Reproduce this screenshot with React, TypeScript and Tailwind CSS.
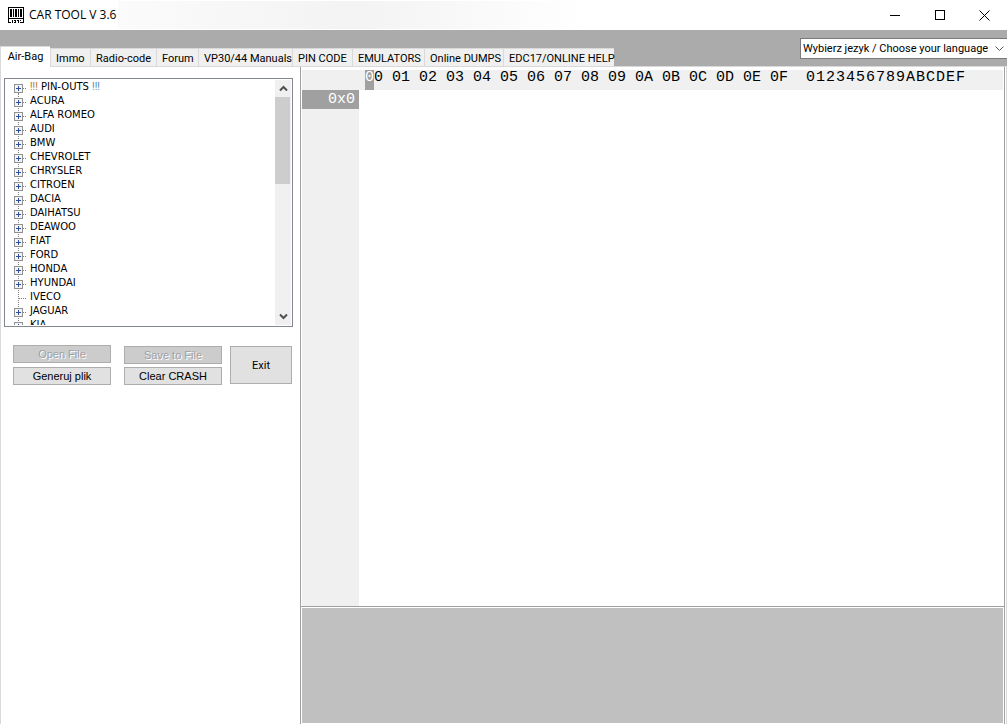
import { useState } from 'react';

const tabs = [
  { label: 'Immo', width: 'w-10' },
  { label: 'Radio-code', width: 'w-[66px]' },
  { label: 'Forum', width: 'w-[42px]' },
  { label: 'VP30/44 Manuals', width: 'w-[94px]' },
  { label: 'PIN CODE', width: 'w-[60px]' },
  { label: 'EMULATORS', width: 'w-[72px]' },
  { label: 'Online DUMPS', width: 'w-[79px]' },
  { label: 'EDC17/ONLINE HELP', width: 'w-[111px]' },
];

const makes = [
  '!!! PIN-OUTS !!!', 'ACURA', 'ALFA ROMEO', 'AUDI', 'BMW', 'CHEVROLET', 'CHRYSLER', 'CITROEN', 'DACIA',
  'DAIHATSU', 'DEAWOO', 'FIAT', 'FORD', 'HONDA', 'HYUNDAI', 'IVECO', 'JAGUAR', 'KIA',
];

const digits = '0123456789ABCDEF'.split('');

function AppIcon() {
  return (
    <svg width="16" height="16" viewBox="0 0 16 16" shapeRendering="crispEdges" aria-hidden="true">
      <path d="M0 0h16v16h-4v-1h3V1H1v14h2v1H0z" fill="#000" />
      <path d="M2 2h2v8H2zM5 2h1v8H5zM7 2h2v8H7zM10 2h1v8h-1zM12 2h2v8h-2zM1 11h14v1H1zM4 13h1v3H4zM6 13h2v1H6zM7 14h1v1H7zM6 15h2v1H6zM9 13h2v1H9zM10 14h1v2h-1zM12 13h1v1h-1z" fill="#000" />
    </svg>
  );
}

function Expander({ leaf, first }: { leaf: boolean; first: boolean }) {
  return (
    <svg className="shrink-0" width="16" height="14" viewBox="0 0 16 14" shapeRendering="crispEdges" aria-hidden="true">
      <path d={first ? 'M5.5 7v7' : 'M5.5 0v14'} stroke="#808080" strokeDasharray="1 1" />
      <path d="M6 8.5h7" stroke="#808080" strokeDasharray="1 1" />
      {!leaf && (
        <>
          <rect x="1.500" y="4.500" width="8" height="8" fill="#f4f4f4" stroke="#919191" />
          <path d="M3 8.500h5M5.500 6v5" stroke="#2f4f9f" />
        </>
      )}
    </svg>
  );
}

function Chevron({ up = false }: { up?: boolean }) {
  return (
    <svg width="9" height="7" viewBox="0 0 9 7" fill="none" stroke="#505050" strokeWidth="2" aria-hidden="true">
      <path d={up ? 'M1 5.500 4.500 2 8 5.500' : 'M1 1.500 4.500 5 8 1.500'} />
    </svg>
  );
}

function MakeLabel({ text }: { text: string }) {
  if (!text.startsWith('!!!')) return <>{text}</>;
  return (
    <>
      <span className="font-['Roboto',sans-serif] text-[#b87020]">!!!</span>
      {` ${text.slice(4, -4)} `}
      <span className="font-['Roboto',sans-serif] text-[#4a86b8]">!!!</span>
    </>
  );
}

const caption = 'flex h-7 w-[45px] items-center justify-center';
const button = 'flex h-[18px] w-[98px] items-center justify-center border border-[#adadad] font-["Liberation_Sans",sans-serif] text-[11px] leading-4';

export default function App() {
  const [active, setActive] = useState('Air-Bag');
  return (
    <div className="flex min-h-screen flex-col bg-white font-['Roboto',sans-serif] text-[11px] text-black">
      <header className="flex h-[30px] items-center bg-white pl-2">
        <AppIcon />
        <h1 className="w-[94px] whitespace-nowrap pl-[5px] font-['Open_Sans',sans-serif] text-xs leading-4">CAR TOOL V 3.6</h1>
        <div className="h-7 w-[470px] bg-linear-to-r from-[#fbfbfb] via-[#f3f3f3] to-white" />
        <div className="ml-auto flex">
          <button className={caption} aria-label="Minimize">
            <svg width="10" height="10" stroke="#000" shapeRendering="crispEdges"><path d="M0 5.500h10" /></svg>
          </button>
          <button className={caption} aria-label="Maximize">
            <svg width="10" height="10" fill="none" stroke="#000" shapeRendering="crispEdges"><path d="M.5.5h9v9h-9z" /></svg>
          </button>
          <button className={caption} aria-label="Close">
            <svg width="11" height="11" stroke="#000"><path d="m.5.5 10 10m0-10-10 10" /></svg>
          </button>
        </div>
      </header>

      <nav className="flex h-9 items-end justify-between bg-[#ababab]">
        <div role="tablist" className="flex items-end whitespace-nowrap">
          <button
            role="tab"
            aria-selected={active === 'Air-Bag'}
            onClick={() => setActive('Air-Bag')}
            className="relative z-10 -mb-px flex h-[21px] w-[50px] items-center justify-center border-t border-l border-[#d9d9d9] bg-white leading-4"
          >
            Air-Bag
          </button>
          {tabs.map(({ label, width }) => (
            <button
              key={label}
              role="tab"
              aria-selected={active === label}
              onClick={() => setActive(label)}
              className={`${width} flex h-[18px] items-center justify-start border-t border-l border-[#d9d9d9] bg-[#f0f0f0] pt-0.5 pl-[5px] leading-4`}
            >
              {label}
            </button>
          ))}
        </div>
        <div className="flex h-full pt-2">
          <label htmlFor="language" className="sr-only">Language</label>
          <div className="grid h-[21px] w-[207px]">
            <select
              id="language"
              className="col-start-1 row-start-1 h-[21px] appearance-none border border-r-0 border-[#7a7a7a] bg-white pl-0.5 text-[11px] leading-4"
            >
              <option>Wybierz jezyk / Choose your language</option>
            </select>
            <svg className="pointer-events-none col-start-1 row-start-1 mr-[3px] self-center justify-self-end" width="9" height="6" fill="none" stroke="#555" aria-hidden="true">
              <path d="m.5.5 4 4 4-4" />
            </svg>
          </div>
        </div>
      </nav>

      <main className="flex flex-1 border-t border-l border-[#d9d9d9]">
        <aside className="flex w-[299px] shrink-0 flex-col">
          <section className="mt-[11px] ml-[3px] flex h-[249px] w-[289px] border border-[#828790] p-px">
            <ul className="flex-1 overflow-hidden pl-[7px] text-[10px]">
              {makes.map((make, i) => (
                <li key={make} className="flex h-3.5 items-center whitespace-nowrap leading-3.5">
                  <Expander leaf={make === 'IVECO'} first={i === 0} />
                  <span className="whitespace-pre pl-px font-['DejaVu_Sans',sans-serif]"><MakeLabel text={make} /></span>
                </li>
              ))}
            </ul>
            <div className="flex w-4 flex-col items-center bg-[#f0f0f0]">
              <button className="flex h-[17px] w-full items-center justify-center" aria-label="Scroll up"><Chevron up /></button>
              <div className="h-[87px] w-[15px] self-start bg-[#cdcdcd]" />
              <button className="mt-auto flex h-[17px] w-full items-center justify-center" aria-label="Scroll down"><Chevron /></button>
            </div>
          </section>
          <section className="mt-[18px] flex items-start pl-3 whitespace-nowrap">
            <div className="flex flex-col gap-1">
              <button disabled className={`${button} bg-[#cccccc] text-[#a0a0a0] text-shadow-[1px_1px_0_white]`}>Open File</button>
              <button className={`${button} bg-[#e1e1e1]`}>Generuj plik</button>
            </div>
            <div className="mt-px ml-[13px] flex flex-col gap-[3px]">
              <button disabled className={`${button} bg-[#cccccc] text-[#a0a0a0] text-shadow-[1px_1px_0_white]`}>Save to File</button>
              <button className={`${button} bg-[#e1e1e1]`}>Clear CRASH</button>
            </div>
            <button className="mt-px ml-2 h-[38px] w-[62px] border border-[#adadad] bg-[#e1e1e1] pt-0.5 text-[11px]">Exit</button>
          </section>
        </aside>

        <section className="mr-px flex min-w-0 flex-1 flex-col border-x border-[#a0a0a0] pt-[3px]">
          <div className="flex flex-1 flex-col border-l border-white font-['Liberation_Mono',monospace] text-[15px] leading-4">
            <div className="mr-px flex h-5 bg-[#f0f0f0] pl-[63px]">
              {digits.map((d, i) => (
                <span key={d} className="w-[27px] shrink-0">
                  {i === 0 ? <><span className="inline-block h-5 w-[9px] bg-[#a0a0a0] text-white">0</span>0</> : `0${d}`}
                </span>
              ))}
              <span className="flex pl-[9px]">
                {digits.map((d) => <span key={d} className="w-2.5">{d}</span>)}
              </span>
            </div>
            <div className="flex flex-1">
              <div className="w-[57px] bg-[#f0f0f0]">
                <div className="h-[19px] bg-[#a0a0a0] pt-0.5 pr-1 text-right text-white">0x0</div>
              </div>
            </div>
          </div>
          <div className="h-[118px] border-t border-[#a0a0a0] bg-white">
            <div className="mx-px mt-px h-[115px] bg-[#c0c0c0]" />
          </div>
        </section>
        <div className="w-px bg-[#d9d9d9]" />
      </main>
    </div>
  );
}
